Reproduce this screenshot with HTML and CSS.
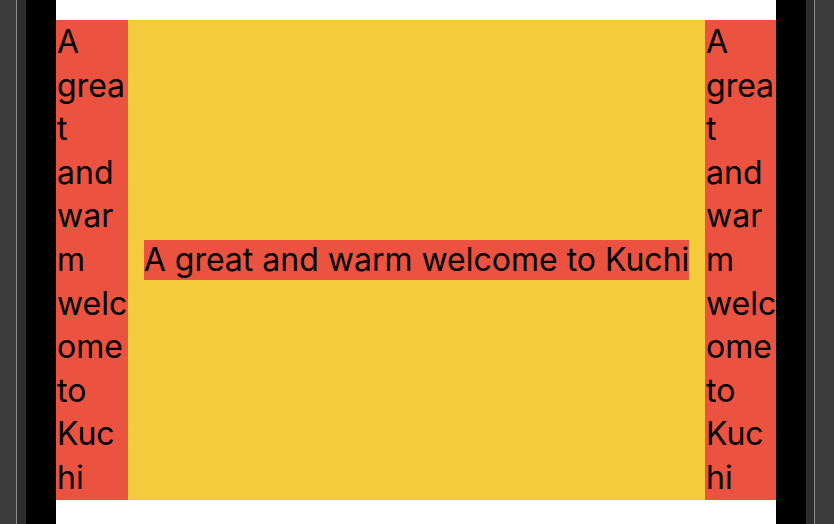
FILE: index.html
```html
<!DOCTYPE html>
<html>
<head>
<meta charset="utf-8">
<link rel="stylesheet" href="styles.css">
</head>
<body>
<div class="device">
  <div class="bezel left">
    <div class="outer"></div>
    <div class="edge"></div>
    <div class="inner"></div>
    <div class="black"></div>
  </div>
  <div class="screen">
    <div class="row">
      <div class="col"><div class="txt">A great and warm welcome to Kuchi</div></div>
      <div class="center"><span class="label">A great and warm welcome to Kuchi</span></div>
      <div class="col right"><div class="txt">A great and warm welcome to Kuchi</div></div>
    </div>
  </div>
  <div class="bezel rightb">
    <div class="black"></div>
    <div class="inner"></div>
    <div class="edge"></div>
    <div class="outer"></div>
  </div>
</div>
</body>
</html>
```
FILE: styles.css
```css
html, body {
  margin: 0;
  padding: 0;
  width: 834px;
  height: 524px;
  overflow: hidden;
  background: #000;
}
.device {
  display: flex;
  width: 834px;
  height: 524px;
}
.bezel {
  display: flex;
  height: 100%;
}
.bezel.left .outer { width: 16px; }
.bezel.rightb .outer { width: 19px; }
.outer { background: #3c3c3c; }
.edge { width: 1px; background: #8c8c8c; }
.bezel.left .inner { width: 9px; }
.bezel.rightb .inner { width: 8px; }
.inner { background: #2d2d2d; }
.black { width: 30px; background: #000; }
.screen {
  width: 720px;
  background: #fff;
  padding: 20px 0 24px;
  box-sizing: border-box;
}
.row {
  display: flex;
  height: 480px;
}
.col {
  width: 72px;
  background: #eb523f;
  padding-left: 1px;
  box-sizing: border-box;
  overflow: hidden;
}
.col.right {
  width: 71px;
}
.txt {
  width: 71px;
  font-family: Inter, "Noto Sans", sans-serif;
  font-size: 32px;
  line-height: 43.6px;
  color: #000;
  overflow-wrap: anywhere;
}
.center {
  flex: 1;
  background: #f5cb3e;
  display: flex;
  align-items: center;
  justify-content: center;
}
.label {
  background: #eb523f;
  font-family: Inter, "Noto Sans", sans-serif;
  font-size: 32px;
  line-height: 40px;
  color: #000;
  white-space: nowrap;
}
```
